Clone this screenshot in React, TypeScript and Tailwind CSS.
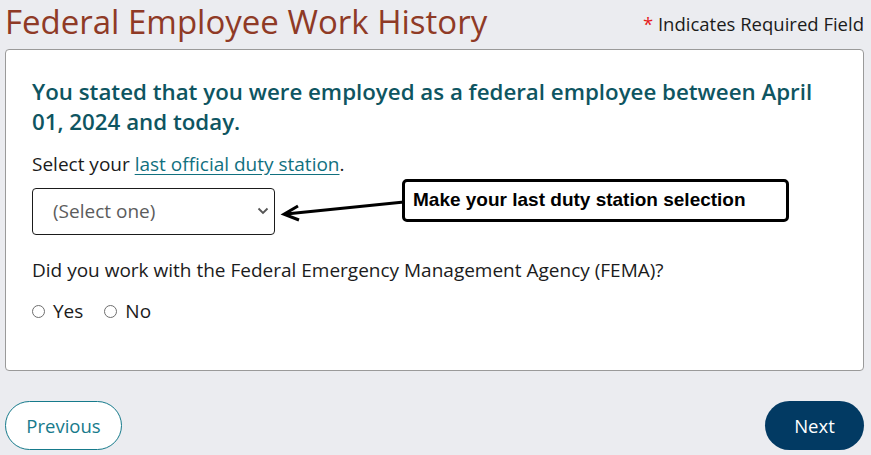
import React from "react";

export default function App() {
  const font = { fontFamily: '"Open Sans", "Noto Sans", sans-serif' } as React.CSSProperties;
  return (
    <div className="min-h-[455px] w-full bg-[#ebecf0] pl-[5px] pr-[7px]" style={font}>
      <div className="flex items-end justify-between">
        <h1 className="text-[33px] font-medium leading-[44px] text-[#8f3a26]">
          Federal Employee Work History
        </h1>
        <div className="pb-[8px] text-[18.5px] leading-[24px] text-[#1b1b1b]">
          <span className="text-[#e51b1b]">*</span> Indicates Required Field
        </div>
      </div>

      <div className="relative mt-[5px] h-[322px] rounded-[4px] border border-[#9a9a9a] bg-white pl-[26px] pr-[40px] pt-[27px]">
        <h2 className="text-[22.3px] font-semibold leading-[30px] text-[#0e5561]">
          You stated that you were employed as a federal employee between April 01, 2024 and today.
        </h2>
        <p className="mt-[14px] text-[19px] leading-[26px] text-[#1b1b1b]">
          Select your{" "}
          <a href="#" className="text-[#11707f] underline underline-offset-[3px]">
            last official duty station
          </a>
          .
        </p>
        <div className="relative mt-[11px] h-[47px] w-[243px]">
          <select className="h-full w-full appearance-none rounded-[4px] border border-[#1b1b1b] bg-white pl-[20px] text-[19px] text-[#5c5c5c]">
            <option>(Select one)</option>
          </select>
          <svg className="pointer-events-none absolute right-[6px] top-[19px]" width="12" height="8" viewBox="0 0 12 8">
            <path d="M1.5 1.5 L6 6 L10.5 1.5" fill="none" stroke="#555" strokeWidth="1.8" />
          </svg>
        </div>
        <p className="mt-[22px] text-[19px] leading-[26px] text-[#1b1b1b] whitespace-nowrap">
          Did you work with the Federal Emergency Management Agency (FEMA)?
        </p>
        <div className="mt-[15px] flex items-center text-[19px] leading-[26px] text-[#1b1b1b]">
          <label className="flex items-center gap-[8px]">
            <span className="inline-block h-[13px] w-[13px] rounded-full border border-[#6e6e6e] bg-white" />
            Yes
          </label>
          <label className="ml-[21px] flex items-center gap-[8px]">
            <span className="inline-block h-[13px] w-[13px] rounded-full border border-[#6e6e6e] bg-white" />
            No
          </label>
        </div>

        <svg className="absolute left-[270px] top-[142px]" width="130" height="40" viewBox="0 0 130 40">
          <line x1="10" y1="22" x2="128" y2="10" stroke="#000" strokeWidth="3" />
          <path d="M22 14 L8 22.2 L23 28" fill="none" stroke="#000" strokeWidth="3" strokeLinejoin="miter" />
        </svg>
        <div
          className="absolute left-[396px] top-[129px] flex h-[43px] w-[387px] items-center rounded-[5px] border-[3px] border-black bg-white pl-[8px] text-[19px] font-bold text-black"
          style={{ fontFamily: '"Liberation Sans", Arial, sans-serif' }}
        >
          Make your last duty station selection
        </div>
      </div>

      <div className="mt-[30px] flex items-center justify-between">
        <button className="h-[49px] w-[117px] rounded-full border border-[#167a8b] bg-white text-[18.5px] text-[#167a8b]">
          Previous
        </button>
        <button className="h-[49px] w-[99px] rounded-full bg-[#023a63] text-[18.5px] text-white">
          Next
        </button>
      </div>
    </div>
  );
}
